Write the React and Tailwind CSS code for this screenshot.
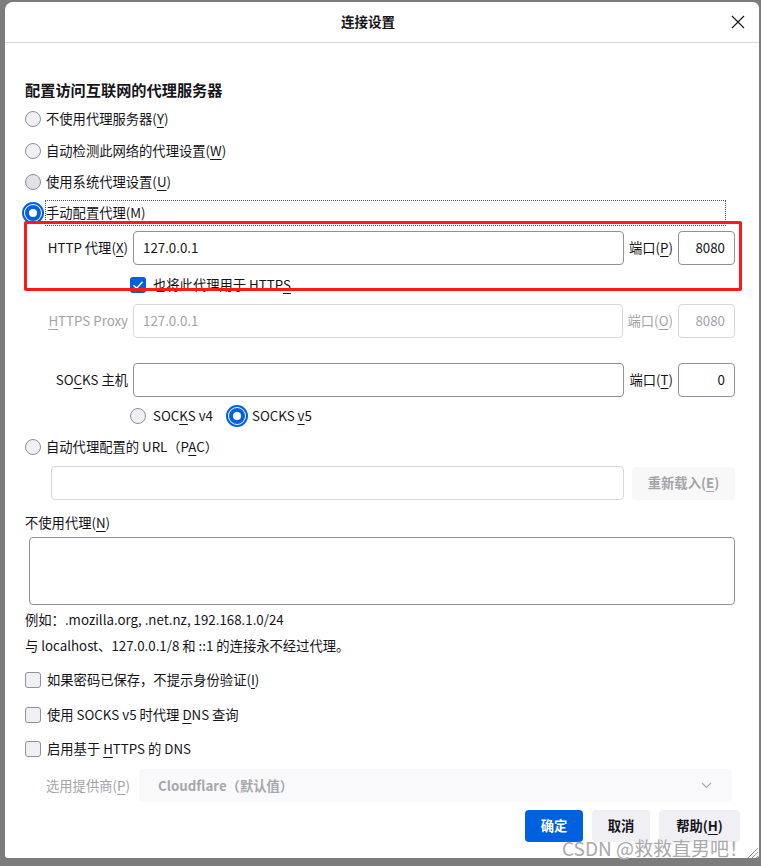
import React from 'react';

const FONT = { fontFamily: '"Noto Sans CJK SC", "Noto Sans", sans-serif' };

const K = ({ children }) => <span className="underline underline-offset-[3px] decoration-1">{children}</span>;

const Radio = ({ checked, dark }) =>
  checked ? (
    <span className="w-4 h-4 rounded-full border-[4px] border-[#0061e0] bg-white shrink-0 outline-2 outline-[#0061e0] outline-offset-1" />
  ) : (
    <span className={`w-4 h-4 rounded-full border border-[#8f8f9d] shrink-0 ${dark ? 'bg-[#e0e0e6]' : 'bg-[#f0f0f4]'}`} />
  );

const Checkbox = ({ checked }) =>
  checked ? (
    <span className="w-4 h-4 rounded-[3px] bg-[#0061e0] shrink-0 flex items-center justify-center">
      <svg width="12" height="12" viewBox="0 0 12 12" fill="none">
        <path d="M1.5 6.2 4.6 9.2 10.6 2.8" stroke="white" strokeWidth="1.4" />
      </svg>
    </span>
  ) : (
    <span className="w-4 h-4 rounded-[3px] border border-[#8f8f9d] bg-[#f0f0f4] shrink-0" />
  );

const Input = ({ value, disabled, right, className = '' }) => (
  <div
    className={`h-[34px] rounded-[4px] border flex items-center ${
      disabled ? 'border-[#d7d7db] text-[#a3a3a8]' : 'border-[#8f8f9d] text-[#15141a]'
    } ${right ? 'justify-end pr-[9px]' : 'pl-[9px]'} ${className}`}
  >
    {value}
  </div>
);

const ProxyRow = ({ label, value, portLabel, port, disabled }) => (
  <div className={`flex items-center h-[34px] ${disabled ? 'text-[#a3a3a8]' : ''}`}>
    <div className="w-[103px] text-right shrink-0">{label}</div>
    <Input value={value} disabled={disabled} className="flex-1 ml-[5px]" />
    <div className="mx-[5px] shrink-0">{portLabel}</div>
    <Input value={port} disabled={disabled} right className="w-[57px] shrink-0" />
  </div>
);

const RadioRow = ({ children, checked, dark, className = '' }) => (
  <div className={`flex items-center h-[20px] gap-[5px] ${className}`}>
    <Radio checked={checked} dark={dark} />
    <span>{children}</span>
  </div>
);

const CheckRow = ({ children, className = '' }) => (
  <div className={`flex items-center h-[20px] gap-[6px] ${className}`}>
    <Checkbox />
    <span>{children}</span>
  </div>
);

export default function App() {
  return (
    <div className="relative w-[761px] h-[866px] overflow-hidden bg-[#7c7c7c] pl-[5px] pt-[2px] text-[13.3px] leading-none text-[#15141a]" style={FONT}>
      <div className="w-[754px] h-[856px] bg-white rounded-tl-[8px] rounded-tr-[6px] rounded-b-[3px] flex flex-col">
        {/* title bar */}
        <div className="h-[41px] border-b border-[#d8d8d8] flex items-center justify-center relative shrink-0">
          <span className="font-bold text-[13.5px] mr-[28px]">连接设置</span>
          <svg className="absolute right-[14px] top-[13px]" width="14" height="14" viewBox="0 0 14 14">
            <path d="M1 1 13 13M13 1 1 13" stroke="#1a1a1a" strokeWidth="1.2" />
          </svg>
        </div>

        <div className="flex flex-col pl-[20px] pr-[24px] pt-[37px]">
          <div className="h-[20px] flex items-center font-bold text-[15.2px]">配置访问互联网的代理服务器</div>

          <RadioRow className="mt-[9px]">不使用代理服务器(<K>Y</K>)</RadioRow>
          <RadioRow className="mt-[12px]">自动检测此网络的代理设置(<K>W</K>)</RadioRow>
          <RadioRow className="mt-[11px]" dark>使用系统代理设置(<K>U</K>)</RadioRow>
          <div className="mt-[8px] h-[26px] flex items-center gap-[5px] mr-[9px]">
            <Radio checked />
            <span className="flex-1 h-full flex items-center border border-dotted border-[#555] -ml-[1px]">
              手动配置代理(<K>M</K>)
            </span>
          </div>

          <div className="mt-[5px]">
            <ProxyRow label={<>HTTP 代理(<K>X</K>)</>} value="127.0.0.1" portLabel={<>端口(<K>P</K>)</>} port="8080" />
          </div>
          <div className="mt-[11px] h-[18px] flex items-center pl-[105px] gap-[7px]">
            <Checkbox checked />
            <span>也将此代理用于 HTTP<K>S</K></span>
          </div>
          <div className="mt-[10px]">
            <ProxyRow disabled label={<><K>H</K>TTPS Proxy</>} value="127.0.0.1" portLabel={<>端口(<K>O</K>)</>} port="8080" />
          </div>
          <div className="mt-[25px]">
            <ProxyRow label={<>SO<K>C</K>KS 主机</>} value="" portLabel={<>端口(<K>T</K>)</>} port="0" />
          </div>
          <div className="mt-[9px] h-[20px] flex items-center pl-[105px]">
            <Radio />
            <span className="ml-[7px]">SOC<K>K</K>S v4</span>
            <span className="ml-[16px] flex">
              <Radio checked />
            </span>
            <span className="ml-[7px]">SOCKS <K>v</K>5</span>
          </div>

          <RadioRow className="mt-[11px]">自动代理配置的 URL（P<K>A</K>C）</RadioRow>
          <div className="mt-[9px] flex items-center pl-[26px] gap-[8px]">
            <Input value="" disabled className="flex-1" />
            <div className="w-[103px] h-[33px] rounded-[4px] bg-[#f8f8f9] flex items-center justify-center font-semibold text-[#a3a3a8]">
              重新载入(<K>E</K>)
            </div>
          </div>

          <div className="mt-[13px] h-[20px] flex items-center">不使用代理(<K>N</K>)</div>
          <div className="mt-[4px] ml-[4px] h-[68px] rounded-[4px] border border-[#8f8f9d]" />
          <div className="mt-[5px] h-[20px] flex items-center">例如：.mozilla.org, .net.nz, 192.168.1.0/24</div>
          <div className="mt-[6px] h-[20px] flex items-center">与 localhost、127.0.0.1/8 和 ::1 的连接永不经过代理。</div>

          <CheckRow className="mt-[14px]">如果密码已保存，不提示身份验证(<K>I</K>)</CheckRow>
          <CheckRow className="mt-[15px]">使用 SOCKS v5 时代理 <K>D</K>NS 查询</CheckRow>
          <CheckRow className="mt-[14px]">启用基于 <K>H</K>TTPS 的 DNS</CheckRow>

          <div className="mt-[10px] h-[33px] flex items-center pl-[21px] mr-[3px]">
            <span className="text-[#a3a3a8] w-[93px] shrink-0">选用提供商(<K>P</K>)</span>
            <div className="flex-1 h-full rounded-[4px] bg-[#f9f9fb] flex items-center justify-between pl-[19px] pr-[20px]">
              <span className="font-semibold text-[#a6a6ab]">Cloudflare（默认值）</span>
              <svg width="11" height="7" viewBox="0 0 11 7" fill="none">
                <path d="M1 1 5.5 5.5 10 1" stroke="#a6a6ab" strokeWidth="1.1" />
              </svg>
            </div>
          </div>

          <div className="mt-[8px] h-[32px] flex justify-end gap-[9px] -mr-[5px] font-bold">
            <div className="w-[58px] rounded-[4px] bg-[#0061e0] text-white flex items-center justify-center">确定</div>
            <div className="w-[58px] rounded-[4px] bg-[#f0f0f4] flex items-center justify-center">取消</div>
            <div className="w-[81px] rounded-[4px] bg-[#f0f0f4] flex items-center justify-center">帮助(<K>H</K>)</div>
          </div>
        </div>
      </div>

      {/* red annotation */}
      <div className="absolute left-[24px] top-[221px] w-[718px] h-[70px] border-[3px] border-[#ff1a1a] rounded-[2px] pointer-events-none" />

      {/* watermark */}
      <div
        className="absolute left-[562px] top-[838px] text-[19px] leading-none text-[#a9a9a9] whitespace-nowrap"
        style={{ textShadow: '0 0 1px #fff' }}
      >
        CSDN @救救直男吧！
      </div>

      {/* resize grip */}
      <svg className="absolute left-[745px] top-[845px]" width="14" height="14" viewBox="0 0 14 14">
        <path d="M13 3 3 13M13 7 7 13M13 11 11 13" stroke="#9a9a9a" strokeWidth="1" />
      </svg>
    </div>
  );
}
